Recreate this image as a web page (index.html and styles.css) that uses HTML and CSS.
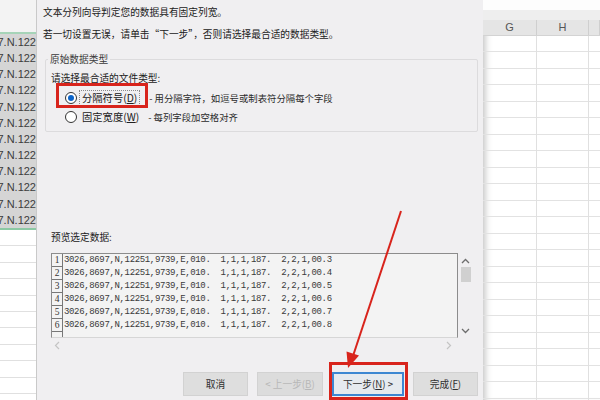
FILE: index.html
```html
<!DOCTYPE html>
<html lang="zh-CN">
<head>
    <meta charset="UTF-8">
    <title>文本分列向导</title>
    <link rel="stylesheet" href="styles.css">
</head>
<body>
    <div class="page">
        <div class="sheet-left">
            <div class="sl-head"></div>
            <div class="sl-sel">
                <div class="sl-cell"><span>57.N.122</span></div>
                <div class="sl-cell"><span>57.N.122</span></div>
                <div class="sl-cell"><span>57.N.122</span></div>
                <div class="sl-cell"><span>57.N.122</span></div>
                <div class="sl-cell"><span>57.N.122</span></div>
                <div class="sl-cell"><span>57.N.122</span></div>
                <div class="sl-cell"><span>57.N.122</span></div>
                <div class="sl-cell"><span>57.N.122</span></div>
                <div class="sl-cell"><span>57.N.122</span></div>
                <div class="sl-cell"><span>57.N.122</span></div>
                <div class="sl-cell"><span>57.N.122</span></div>
                <div class="sl-cell"><span>57.N.122</span></div>
            </div>
            <div class="sl-rest"></div>
        </div>

        <div class="dialog">
            <p class="line">文本分列向导判定您的数据具有固定列宽。</p>
            <p class="line second">若一切设置无误，请单击“下一步”，否则请选择最合适的数据类型。</p>

            <fieldset class="group">
                <legend>原始数据类型</legend>
                <div class="prompt">请选择最合适的文件类型:</div>
                <div class="option first">
                    <span class="radio checked"></span>
                    <span class="opt-label focus">分隔符号(<u>D</u>)</span>
                    <span class="desc">- 用分隔字符，如逗号或制表符分隔每个字段</span>
                </div>
                <div class="option">
                    <span class="radio"></span>
                    <span class="opt-label">固定宽度(<u>W</u>)</span>
                    <span class="desc">- 每列字段加空格对齐</span>
                </div>
            </fieldset>

            <div class="preview-label">预览选定数据:</div>
            <div class="preview">
                <div class="preview-box">
                    <div class="nums">
                        <span>1</span><span>2</span><span>3</span><span>4</span><span>5</span><span>6</span>
                    </div>
                    <div class="data">
                        <div class="data-row">3026,8697,N,12251,9739,E,010.  1,1,1,187.  2,2,1,00.3</div>
                        <div class="data-row">3026,8697,N,12251,9739,E,010.  1,1,1,187.  2,2,1,00.4</div>
                        <div class="data-row">3026,8697,N,12251,9739,E,010.  1,1,1,187.  2,2,1,00.5</div>
                        <div class="data-row">3026,8697,N,12251,9739,E,010.  1,1,1,187.  2,2,1,00.6</div>
                        <div class="data-row">3026,8697,N,12251,9739,E,010.  1,1,1,187.  2,2,1,00.7</div>
                        <div class="data-row">3026,8697,N,12251,9739,E,010.  1,1,1,187.  2,2,1,00.8</div>
                    </div>
                </div>
                <div class="vscroll">
                    <svg width="9" height="6" viewBox="0 0 9 6"><polyline points="1,5 4.5,1.5 8,5" fill="none" stroke="#6d6d6d" stroke-width="1.3"/></svg>
                    <div class="thumb"></div>
                    <div class="spacer"></div>
                    <svg width="9" height="6" viewBox="0 0 9 6"><polyline points="1,1 4.5,4.5 8,1" fill="none" stroke="#6d6d6d" stroke-width="1.3"/></svg>
                </div>
                <div class="hscroll">
                    <svg width="6" height="9" viewBox="0 0 6 9"><polyline points="5,1 1.5,4.5 5,8" fill="none" stroke="#c4c4c4" stroke-width="1.2"/></svg>
                    <svg width="6" height="9" viewBox="0 0 6 9"><polyline points="1,1 4.5,4.5 1,8" fill="none" stroke="#c4c4c4" stroke-width="1.2"/></svg>
                </div>
            </div>

            <div class="buttons">
                <button class="btn cancel">取消</button>
                <button class="btn prev" disabled>&lt; 上一步(<u>B</u>)</button>
                <button class="btn next">下一步(<u>N</u>) &gt;</button>
                <button class="btn finish">完成(<u>F</u>)</button>
            </div>
        </div>

        <div class="sheet-right">
            <div class="sr-top"></div>
            <div class="sr-head">
                <div class="col">G</div>
                <div class="col">H</div>
                <div class="col"></div>
            </div>
            <div class="sr-body"></div>
        </div>

        <div class="mark mark-radio"></div>
        <div class="mark mark-next"></div>
        <svg class="arrow" width="600" height="400" viewBox="0 0 600 400">
            <line x1="401" y1="211" x2="353" y2="356" stroke="#d8241c" stroke-width="2"/>
            <polygon points="348,368 346.5,351.5 359,355.5" fill="#d8241c"/>
        </svg>
    </div>
</body>
</html>
```

FILE: styles.css
```css
body {
    margin: 0;
    padding: 0;
    font-family: "Liberation Sans", "Noto Sans CJK SC", sans-serif;
    background-color: #ffffff;
}
.page {
    position: relative;
    width: 600px;
    height: 400px;
    overflow: hidden;
    display: flex;
}

/* spreadsheet strip on the left */
.sheet-left {
    width: 36px;
    flex-shrink: 0;
    display: flex;
    flex-direction: column;
    background: #ffffff;
}
.sl-head {
    height: 32px;
    background: #f3f3f3;
    border-bottom: 2px solid #a6d4b8;
}
.sl-sel {
    height: 194px;
    display: grid;
    grid-auto-rows: 1fr;
    background: #d5d5d5;
    border-bottom: 2px solid #8cc9a4;
}
.sl-cell {
    display: flex;
    justify-content: flex-end;
    overflow: hidden;
    white-space: nowrap;
    font-size: 11px;
    line-height: 16px;
    color: #3c3c3c;
}
.sl-cell span {
    flex-shrink: 0;
}
.sl-rest {
    flex: 1;
    background-image: repeating-linear-gradient(to bottom, transparent 0, transparent 15.4px, #e0e0e0 15.4px, #e0e0e0 16.4px);
}

/* the wizard dialog */
.dialog {
    width: 447px;
    flex-shrink: 0;
    box-sizing: border-box;
    padding: 4px 5px 0 6px;
    background: #f0eff1;
    border-left: 1px solid #c9c9c9;
    font-family: "Noto Sans CJK SC", "Liberation Sans", sans-serif;
    font-size: 9.7px;
    color: #202020;
}
.line {
    margin: 0;
    line-height: 16px;
    white-space: nowrap;
}
.line.second {
    margin-top: 6px;
}
.group {
    margin: 9px 0 0 2px;
    padding: 0 0 6px 5px;
    border: 1px solid #dcdbdd;
    border-radius: 2px;
}
.group legend {
    padding: 0 2px;
    margin-left: -3px;
    line-height: 16px;
    color: #3a3a3a;
}
.prompt {
    margin-top: 3px;
    line-height: 16px;
}
.option {
    display: flex;
    align-items: center;
    height: 16px;
    margin-top: 3px;
    margin-left: 14px;
    white-space: nowrap;
}
.option.first {
    margin-top: 4px;
}
.radio {
    width: 10px;
    height: 10px;
    border: 1px solid #333333;
    border-radius: 50%;
    background: #ffffff;
    display: flex;
    align-items: center;
    justify-content: center;
    flex-shrink: 0;
}
.radio.checked::after {
    content: "";
    width: 6px;
    height: 6px;
    border-radius: 50%;
    background: #0a63c9;
}
.opt-label {
    margin-left: 2px;
    padding: 0 2px;
    border: 1px solid transparent;
    line-height: 14px;
    font-size: 10.3px;
}
.opt-label.focus {
    border: 1px dotted #8a8a8a;
}
.desc {
    margin-left: 6px;
    color: #2a2a2a;
    font-size: 9.4px;
}
.option.first .desc {
    margin-left: 9px;
}
.preview-label {
    margin: 97px 0 0 8px;
    line-height: 16px;
}

/* preview area */
.preview {
    margin: 8px 0 0 8px;
    display: grid;
    grid-template-columns: 407px 15px;
    grid-template-rows: 85px 14px;
}
.preview-box {
    box-sizing: border-box;
    border: 1px solid #8c8c8c;
    border-bottom: 1px solid #d6d6d6;
    background: #f3f3f3;
    display: flex;
}
.nums {
    width: 10px;
    border-right: 1px solid #777777;
    display: flex;
    flex-direction: column;
}
.nums span {
    height: 12px;
    border-bottom: 1px solid #777777;
    font-family: "Liberation Serif", serif;
    font-size: 9.5px;
    line-height: 13px;
    text-align: center;
    color: #333333;
}
.data {
    padding-left: 1px;
    font-family: "Liberation Mono", monospace;
    font-size: 9px;
    letter-spacing: -0.35px;
    line-height: 13px;
    color: #3a3a3a;
}
.data-row {
    white-space: pre;
}
.vscroll {
    display: flex;
    flex-direction: column;
    align-items: center;
    padding: 5px 0 4px;
    box-sizing: border-box;
}
.vscroll .thumb {
    width: 10px;
    height: 15px;
    margin-top: 3px;
    background: #d0d0d0;
}
.vscroll .spacer {
    flex: 1;
}
.hscroll {
    display: flex;
    justify-content: space-between;
    align-items: center;
    padding: 0 6px 0 3px;
}

/* buttons */
.buttons {
    margin-top: 20px;
    display: flex;
    justify-content: flex-end;
    gap: 9px;
}
.btn {
    height: 24px;
    padding: 0;
    border: 1px solid #d2d2d2;
    background: #dedede;
    font-family: "Noto Sans CJK SC", sans-serif;
    font-size: 9.7px;
    color: #303030;
}
.cancel {
    width: 65px;
}
.prev {
    width: 66px;
    color: #b8b8b8;
    background: #dcdcdc;
}
.next {
    width: 72px;
    border: 2px solid #3d87d2;
    background: #e6eaef;
}
.finish {
    width: 65px;
}

/* spreadsheet on the right */
.sheet-right {
    flex: 1;
    display: flex;
    flex-direction: column;
    box-shadow: inset 7px 0 7px -5px rgba(0, 0, 0, 0.25);
}
.sr-top {
    height: 20px;
    background: linear-gradient(to bottom, #fdfdfd 0, #fdfdfd 10px, #eeeeee 10px);
}
.sr-head {
    height: 15px;
    display: grid;
    grid-template-columns: 54px 52px 1fr;
    background: #e5e5e5;
    border-bottom: 1px solid #d3d3d3;
}
.sr-head .col {
    border-right: 1px solid #cfcfcf;
    text-align: center;
    font-size: 11px;
    line-height: 15px;
    color: #555555;
}
.sr-body {
    flex: 1;
    background-image:
        linear-gradient(to right, transparent 53px, #e0e0e0 53px, #e0e0e0 54px, transparent 54px, transparent 105px, #e0e0e0 105px, #e0e0e0 106px, transparent 106px),
        repeating-linear-gradient(to bottom, transparent 0, transparent 15.5px, #e2e2e2 15.5px, #e2e2e2 16.5px);
}

/* red annotations laid over the picture */
.mark {
    position: absolute;
    box-sizing: border-box;
    border: 3px solid #d8241c;
}
.mark-radio {
    left: 56px;
    top: 83px;
    width: 92px;
    height: 25px;
}
.mark-next {
    left: 329px;
    top: 362px;
    width: 79px;
    height: 38px;
}
.arrow {
    position: absolute;
    left: 0;
    top: 0;
    pointer-events: none;
}
```
